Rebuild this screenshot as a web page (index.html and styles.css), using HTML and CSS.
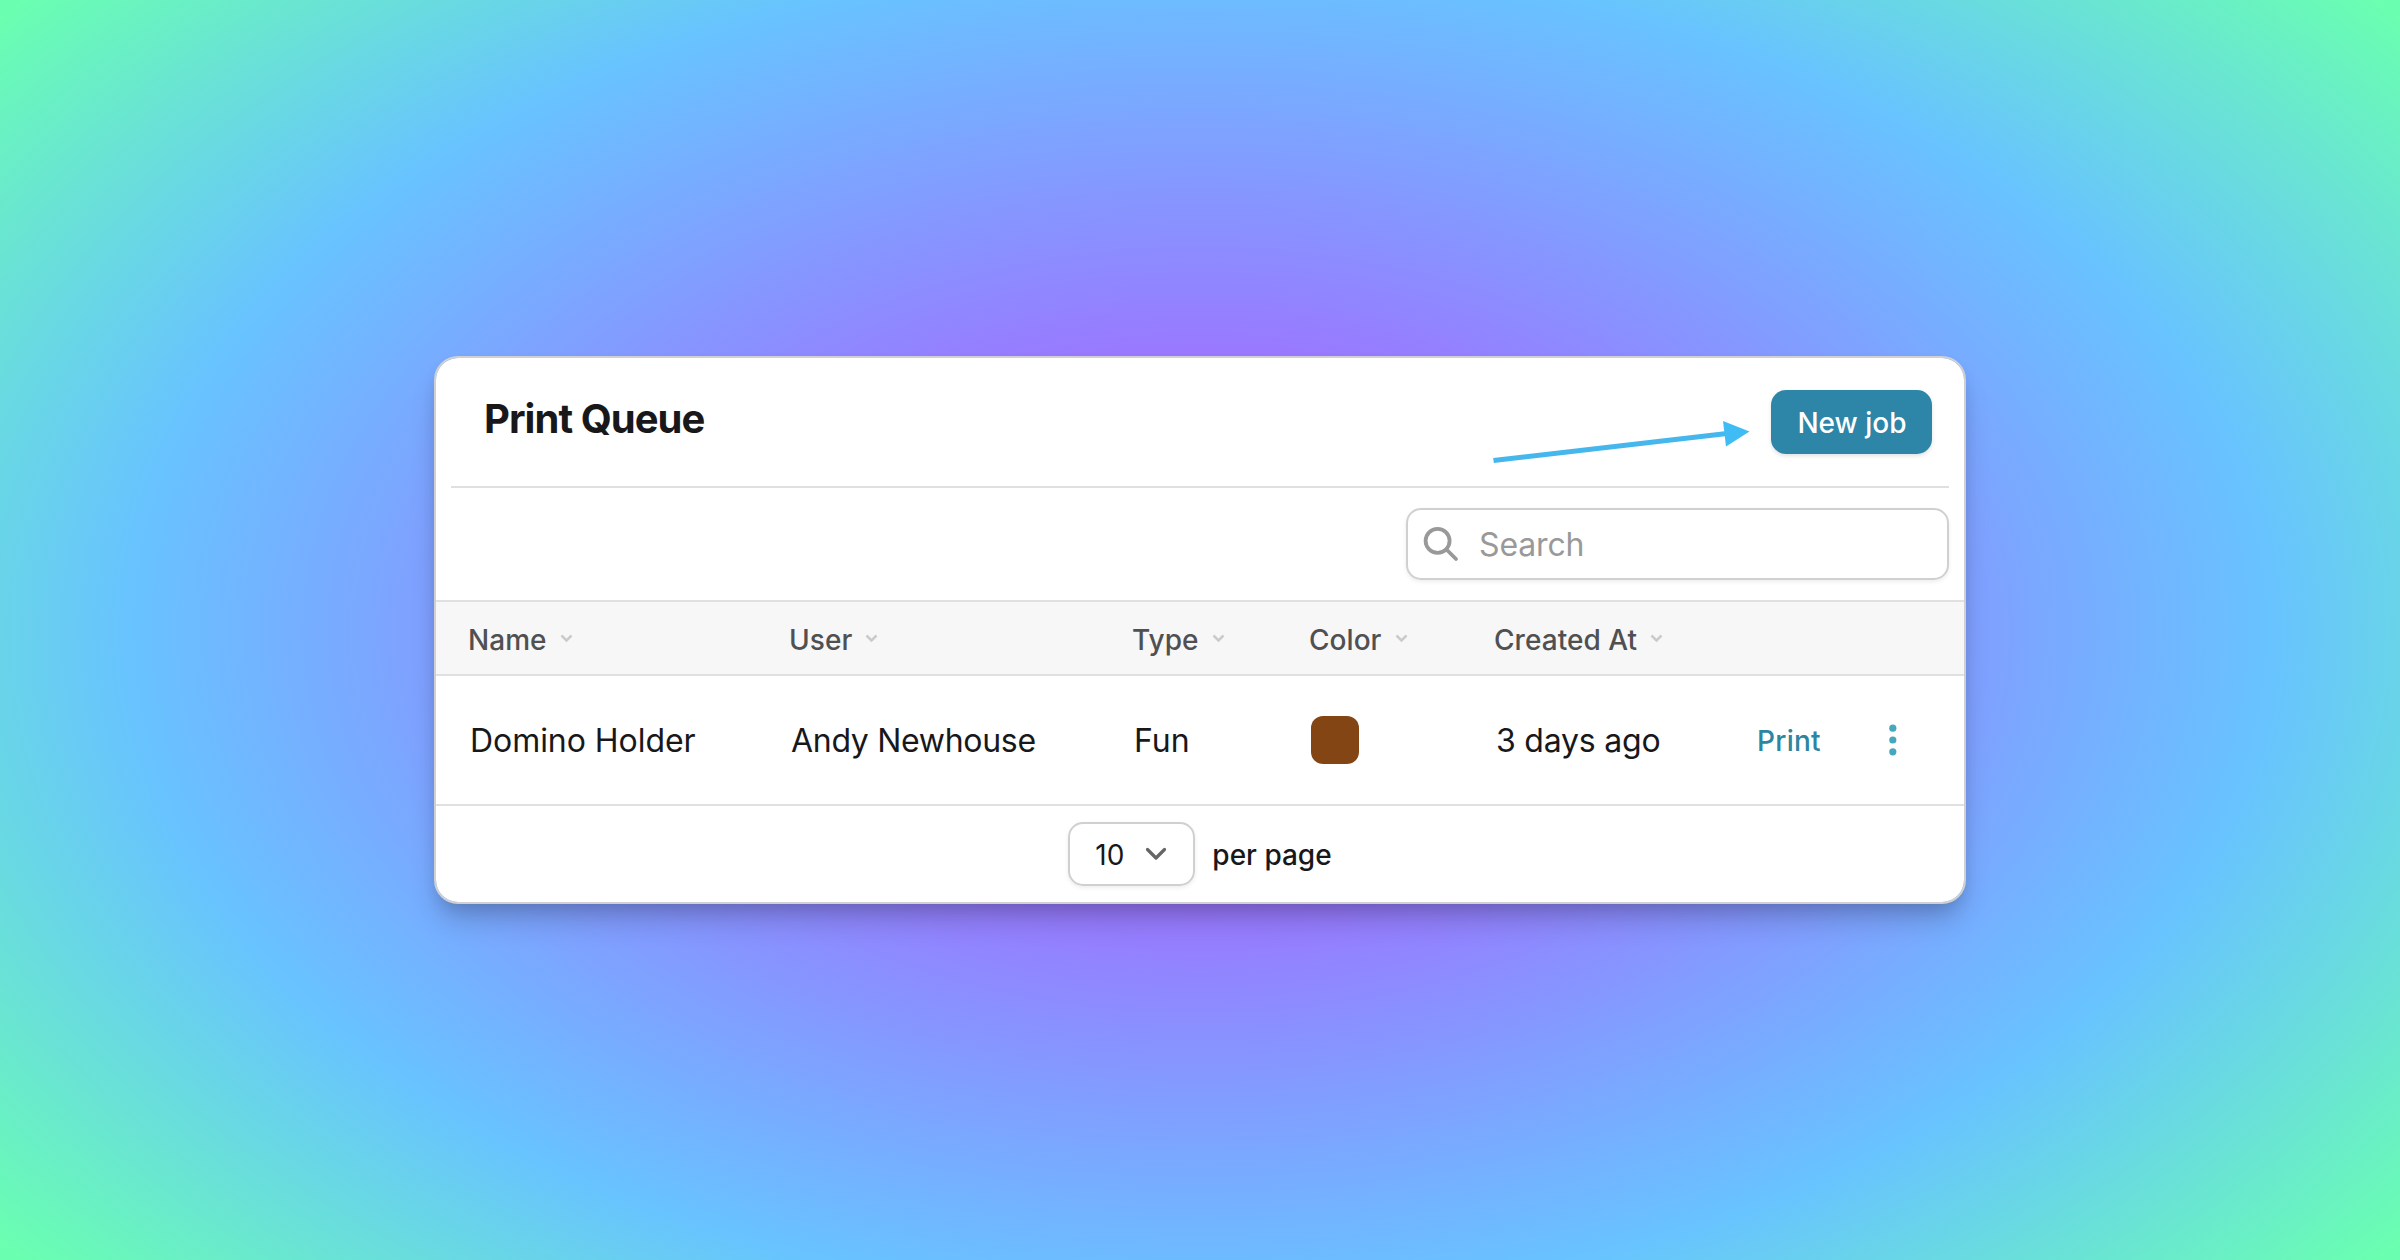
FILE: index.html
```html
<!DOCTYPE html>
<html lang="en">
<head>
<meta charset="utf-8">
<title>Print Queue</title>
<link rel="stylesheet" href="styles.css">
</head>
<body>
<main class="card">
  <header class="header">
    <h1 class="title">Print Queue</h1>
    <button class="new-job">New job</button>
    <svg class="arrow" width="260" height="50" viewBox="0 0 260 50" aria-hidden="true">
      <path d="M2.5 39.5 236 12.5" stroke="#45b7ec" stroke-width="5" fill="none"/>
      <path d="M232 0 258.5 10.5 235 25.5Z" fill="#3fbcf4"/>
    </svg>
  </header>
  <div class="toolbar">
    <label class="search">
      <svg width="36" height="36" viewBox="0 0 36 36" fill="none" stroke="#999" stroke-width="3.8" stroke-linecap="round"><circle cx="14.6" cy="14.8" r="12"/><path d="M23.5 23.5 33 33"/></svg>
      <span>Search</span>
    </label>
  </div>
  <div class="row head">
    <span>Name <svg class="chev" viewBox="0 0 13 9"><path d="M1.5 1.5 6.5 6.5 11.5 1.5"/></svg></span>
    <span>User <svg class="chev" viewBox="0 0 13 9"><path d="M1.5 1.5 6.5 6.5 11.5 1.5"/></svg></span>
    <span>Type <svg class="chev" viewBox="0 0 13 9"><path d="M1.5 1.5 6.5 6.5 11.5 1.5"/></svg></span>
    <span>Color <svg class="chev" viewBox="0 0 13 9"><path d="M1.5 1.5 6.5 6.5 11.5 1.5"/></svg></span>
    <span>Created At <svg class="chev" viewBox="0 0 13 9"><path d="M1.5 1.5 6.5 6.5 11.5 1.5"/></svg></span>
  </div>
  <div class="row body">
    <span>Domino Holder</span>
    <span class="user">Andy Newhouse</span>
    <span>Fun</span>
    <span class="swatch"></span>
    <span class="created">3 days ago</span>
    <a class="print">Print</a>
    <svg class="dots" width="8" height="32" viewBox="0 0 8 32" fill="#45a8bd"><circle cx="3.8" cy="4.2" r="3.6"/><circle cx="3.8" cy="16" r="3.6"/><circle cx="3.8" cy="27.8" r="3.6"/></svg>
  </div>
  <footer class="footer">
    <div class="select"><span>10</span><svg width="22" height="14" viewBox="0 0 22 14" fill="none" stroke="#666" stroke-width="3.2" stroke-linecap="round" stroke-linejoin="round"><path d="M2.5 2.5 11 11 19.5 2.5"/></svg></div>
    <span class="per-page">per page</span>
  </footer>
</main>
</body>
</html>
```
FILE: styles.css
```css
* { box-sizing: border-box; }
body {
  margin: 0;
  height: 1260px;
  display: flex;
  align-items: center;
  justify-content: center;
  font-family: Inter, sans-serif;
  color: #18181a;
  background: radial-gradient(1565px 982px at 50% 50%, #9f70ff 0%, #9b76ff 27%, #68c3ff 68.4%, #6affb0 99%);
}
.card {
  width: 1532px;
  height: 548px;
  border: 2px solid #d0d0d2;
  border-radius: 24px;
  background: #fff;
  background-clip: padding-box;
  box-shadow: 0 20px 30px -6px rgba(0, 0, 0, .2), 0 8px 16px -4px rgba(0, 0, 0, .12);
  overflow: hidden;
}
.header {
  position: relative;
  height: 130px;
  margin: 0 15px;
  padding: 32px 17px 0 33px;
  border-bottom: 2px solid #e0e0e0;
  display: flex;
  align-items: flex-start;
  justify-content: space-between;
}
.title {
  margin: 5px 0 0;
  font-size: 40px;
  line-height: 48px;
  font-weight: 700;
  letter-spacing: -0.95px;
}
.new-job {
  width: 161px;
  height: 64px;
  padding: 2px 0 0 1px;
  border: 0;
  border-radius: 15px;
  background: #2d85a8;
  color: #fff;
  font: 500 28px Inter, sans-serif;
  box-shadow: 0 2px 4px rgba(0, 0, 0, .12);
}
.arrow {
  position: absolute;
  left: 1040px;
  top: 63px;
}
.toolbar {
  height: 112px;
  padding: 20px 15px 0;
  display: flex;
  justify-content: flex-end;
}
.search {
  width: 543px;
  height: 72px;
  border: 2px solid #d0d0d0;
  border-radius: 15px;
  padding-left: 15px;
  display: flex;
  align-items: center;
  gap: 20px;
  font-size: 32px;
  letter-spacing: -.15px;
  color: #999;
  box-shadow: 0 2px 4px rgba(0, 0, 0, .07);
}
.search span { padding-top: 1px; }
.row {
  display: grid;
  grid-template-columns: 321px 343px 177px 185px 261px 132px 1fr;
  padding-left: 32px;
  align-items: center;
}
.head {
  height: 76px;
  border-top: 2px solid #e0e0e0;
  border-bottom: 2px solid #e0e0e0;
  background: #f7f7f7;
  color: #505052;
  font-size: 28px;
  font-weight: 500;
  letter-spacing: .05px;
}
.head span { display: flex; align-items: center; padding-top: 3px; }
.chev {
  width: 13px;
  height: 9px;
  margin: -3px 0 0 13px;
  fill: none;
  stroke: #cbcbcb;
  stroke-width: 2.5;
}
.body {
  height: 130px;
  padding-left: 34px;
  border-bottom: 2px solid #e0e0e0;
  font-size: 32px;
  letter-spacing: -.05px;
}
.user { letter-spacing: -.3px; }
.created { letter-spacing: -.2px; }
.swatch {
  width: 48px;
  height: 48px;
  border-radius: 12px;
  background: #844515;
}
.print {
  padding-top: 2px;
  color: #2d85a0;
  font-size: 28px;
  font-weight: 500;
  letter-spacing: .25px;
}
.footer {
  height: 96px;
  display: flex;
  align-items: center;
  justify-content: center;
  gap: 17px;
  font-size: 28px;
  font-weight: 500;
}
.select {
  width: 127px;
  height: 64px;
  border: 2px solid #d0d0d0;
  border-radius: 15px;
  padding-left: 25px;
  display: flex;
  align-items: center;
  gap: 21px;
  font-weight: 400;
  box-shadow: 0 2px 4px rgba(0, 0, 0, .07);
}
.select span { padding-top: 2px; }
.per-page { padding-top: 2px; }
```
